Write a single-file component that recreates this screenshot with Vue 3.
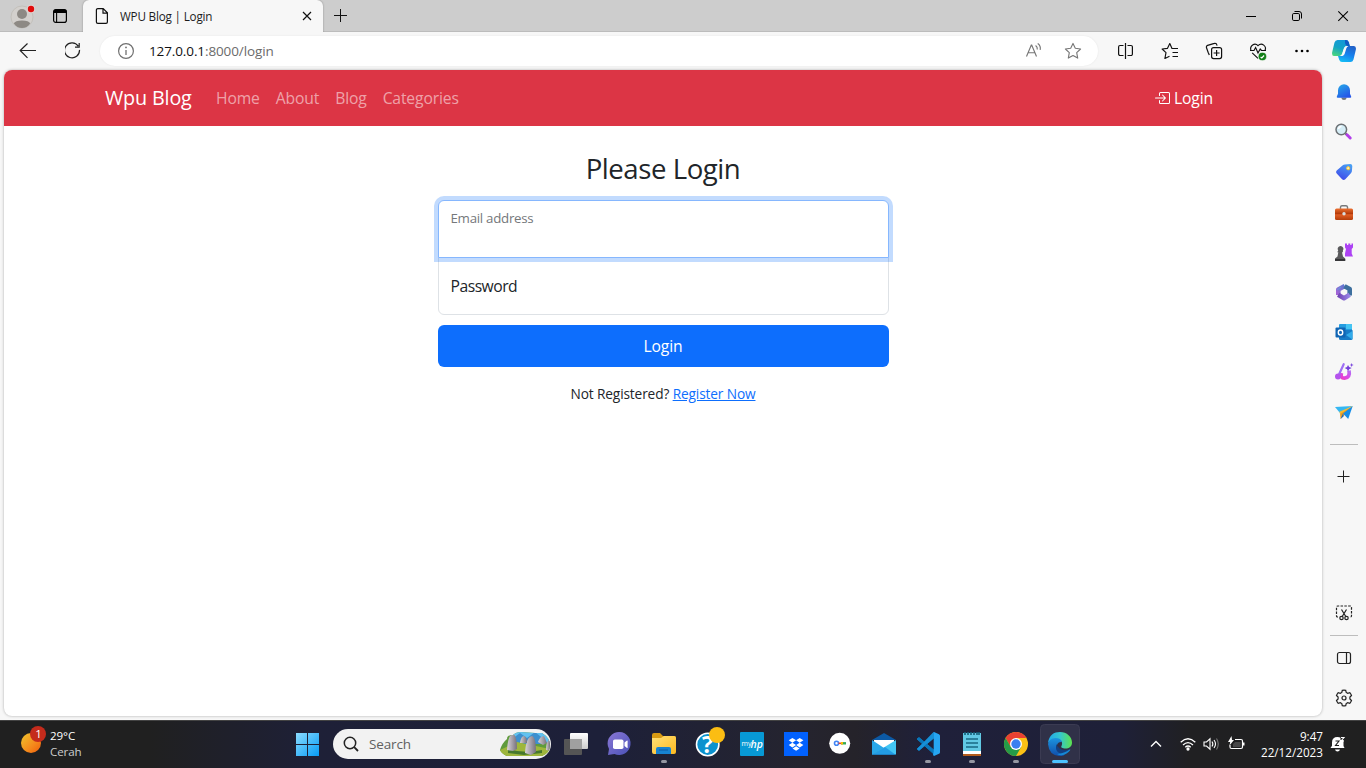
<script setup>
const links = ['Home', 'About', 'Blog', 'Categories']
</script>

<template>
  <div class="screen">
    <header class="tabs">
      <div class="tab-tools">
        <svg class="avatar" width="26" height="26" viewBox="0 0 26 26">
          <circle cx="12" cy="14" r="11" fill="#d3d0cd" stroke="#c3c0bb" />
          <circle cx="12" cy="11" r="5" fill="#8d8984" />
          <path d="M3.8 20.5Q5 17.5 12 17.5T20.2 20.5Q17 25 12 25T3.8 20.5Z" fill="#8d8984" />
          <circle cx="21" cy="6" r="4" fill="#e5d5d2" />
          <circle cx="21" cy="6" r="3.2" fill="#e00b0b" />
        </svg>
        <svg class="workspace" width="16" height="16" viewBox="0 0 16 16">
          <rect x="1.6" y="1.6" width="12.8" height="12.8" rx="2.2" fill="none" stroke="#000" stroke-width="1.2" />
          <path d="M1.5 5V3.5a2 2 0 0 1 2-2h9a2 2 0 0 1 2 2V5z" />
          <path d="M4.6 5v9" stroke="#000" stroke-width="1.1" />
        </svg>
      </div>
      <div class="tab">
        <svg width="14" height="18" viewBox="0 0 14 18" fill="none" stroke="#111" stroke-width="1.2">
          <path d="M2.8 1.6h5.4l4.2 4.2v9.2a1.4 1.4 0 0 1-1.4 1.4H2.8A1.4 1.4 0 0 1 1.4 15V3a1.4 1.4 0 0 1 1.4-1.4zM8 1.8v4.4h4.2" />
        </svg>
        <span class="tab-title">WPU Blog | Login</span>
        <svg width="10" height="10" viewBox="0 0 10 10"><path d="M1 1l8 8M9 1L1 9" stroke="#111" stroke-width="1.2" /></svg>
      </div>
      <svg class="new-tab" width="16" height="16" viewBox="0 0 16 16"><path d="M7.5 1v13M1 7.5h13" stroke="#111" /></svg>
      <div class="window-buttons">
        <svg width="46" height="32" viewBox="0 0 46 32"><path d="M18 16.5h10" stroke="#000" /></svg>
        <svg width="46" height="32" viewBox="0 0 46 32" fill="none" stroke="#000">
          <rect x="18.5" y="13.5" width="7" height="7" rx="1.3" />
          <path d="M20.5 11.5H25a2.5 2.5 0 0 1 2.5 2.5v4.5" />
        </svg>
        <svg width="46" height="32" viewBox="0 0 46 32"><path d="M18.3 11.3l9.6 9.6M27.9 11.3l-9.6 9.6" stroke="#000" stroke-width="1.1" /></svg>
      </div>
    </header>

    <div class="toolbar">
      <div class="nav-buttons">
        <svg width="44" height="38" viewBox="0 0 44 38" fill="none" stroke="#222" stroke-width="1.2"><path d="M13.5 11.5L6.2 18.5l7.3 7.3M6.2 18.5H22" /></svg>
        <svg width="44" height="38" viewBox="0 0 44 38" fill="none" stroke="#222" stroke-width="1.2"><path d="M13.3 14.2a7.500 7.500 0 1 0 1.200 3.700M14.200 11v4.200H10" /></svg>
      </div>
      <div class="address">
        <svg width="18" height="18" viewBox="0 0 18 18">
          <circle cx="9" cy="9" r="7.4" fill="none" stroke="#707070" stroke-width="1.2" />
          <path d="M9 8v5" stroke="#707070" stroke-width="1.3" />
          <circle cx="9" cy="5.4" r="0.9" fill="#707070" />
        </svg>
        <span class="url"><b>127.0.0.1</b>:8000/login</span>
        <svg class="read" width="18" height="18" viewBox="0 0 18 18" fill="none" stroke="#767676" stroke-width="1.15">
          <path d="M1.5 14.500L6.300 3h.4l4.800 11.500M3.200 10.700h6.700M10.600 3.500q2 1.500 1.700 4M12.700 1.400q3.300 2.200 2.500 6.400" />
        </svg>
        <svg width="18" height="18" viewBox="0 0 18 18" fill="none" stroke="#767676" stroke-width="1.1" stroke-linejoin="round">
          <path d="M9 1.4l2.3 4.9 5.3.7-3.9 3.7 1 5.4L9 13.5l-4.7 2.6 1-5.4L1.4 7l5.3-.7z" />
        </svg>
      </div>
      <div class="actions">
        <svg width="44" height="38" viewBox="0 0 44 38" fill="none" stroke="#111" stroke-width="1.2"><path d="M19.500 13.500H16a1.400 1.400 0 0 0-1.400 1.400v7.200A1.400 1.400 0 0 0 16 23.500h3.500M23.500 13.500H27a1.400 1.400 0 0 1 1.400 1.400v7.200A1.400 1.400 0 0 1 27 23.500h-3.500M21.500 11v16" /></svg>
        <svg width="44" height="38" viewBox="0 0 44 38" fill="none" stroke="#111" stroke-width="1.15" stroke-linejoin="round"><path d="M24 16.500L21.800 11.500l-2.400 4.900-5.300.6 3.900 3.700-1.100 5.800 4.600-2.300M23.500 16.500H30M24.500 20.500H30M24.500 24.500H30" /></svg>
        <svg width="44" height="38" viewBox="0 0 44 38" fill="none" stroke="#111" stroke-width="1.2"><rect x="19.6" y="15.6" width="10" height="11" rx="2" /><path d="M24.6 18v6M21.6 21h6M17.3 23l-1.2-2.7-1.6-4.6a1.8 1.8 0 0 1 1.1-2.3l6.8-2a1.8 1.8 0 0 1 2.3 1.2l.4 1" /></svg>
        <svg width="44" height="38" viewBox="0 0 44 38" fill="none" stroke="#111" stroke-width="1.15">
          <path d="M15 18.5c-1.7-4.5 3.7-8.7 7-4.8 3.7-4 9.3.7 6.8 5M16.2 20.8L22 26.4M14 18.5h4l1.6-3 2.4 5.5 2.2-4 1.3 1.5H30" />
          <circle cx="26.4" cy="24.5" r="4.1" fill="#128017" stroke="#f7f7f7" stroke-width=".5" /><path d="M24.6 25l1.2 1 2.3-2.5" stroke="#fff" />
        </svg>
        <svg width="44" height="38" viewBox="0 0 44 38"><circle cx="16.5" cy="19" r="1.300" /><circle cx="22" cy="19" r="1.300" /><circle cx="27.5" cy="19" r="1.300" /></svg>
      </div>
      <svg class="copilot" width="24" height="24" viewBox="0 0 24 24">
        <defs>
          <linearGradient id="cp1" x1=".6" y1="0" x2=".2" y2="1"><stop stop-color="#1598d8" /><stop offset=".5" stop-color="#14a3c5" /><stop offset="1" stop-color="#4ad67e" /></linearGradient>
          <linearGradient id="cp2" x1=".7" y1="0" x2=".3" y2="1"><stop stop-color="#2262c8" /><stop offset=".5" stop-color="#1580ee" /><stop offset="1" stop-color="#15bdf5" /></linearGradient>
        </defs>
        <path d="M5.500 1h8.500q2 0 2.800 2.200l1 3.800h-2.800q-2.300 0-3 2.400l-1.600 5.200Q9.700 17 7.500 17H2Q-.3 17 .1 13.500L2.500 3.500Q3.300 1 5.500 1z" fill="url(#cp1)" />
        <path d="M13 1h1q2 0 2.800 2.200l1 3.800h-2.300q-1.700 0-2.500-3z" fill="#125bc4" />
        <path d="M18.500 23H10q-2 0-2.800-2.200L6 17h3q2.300 0 3-2.400l1.600-5.200q.8-2.400 3-2.400H22q2.300 0 1.900 3.500l-2.400 10q-.8 2.500-3 2.500z" fill="url(#cp2)" />
        <path d="M14.500 7q-2.200.8-2.700 2.600l-1.700 5.200q-.5 1.500-1.700 2.200h1.900q1.700-.3 2.300-2l1.700-5.600q.5-1.700 2-2.400z" fill="#f7f9fa" />
      </svg>
    </div>

    <div class="workspace-row">
      <main class="page">
        <nav class="navbar">
          <div class="container">
            <span class="brand">Wpu Blog</span>
            <a v-for="link in links" :key="link" class="nav-link">{{ link }}</a>
            <a class="nav-link login-link">
              <svg width="16" height="16" viewBox="0 0 16 16" fill="currentColor">
                <path fill-rule="evenodd" d="M6 3.5a.5.5 0 0 1 .5-.5h8a.5.5 0 0 1 .5.5v9a.5.5 0 0 1-.5.5h-8a.5.5 0 0 1-.5-.5v-2a.5.5 0 0 0-1 0v2A1.5 1.5 0 0 0 6.5 14h8a1.5 1.5 0 0 0 1.5-1.5v-9A1.5 1.5 0 0 0 14.5 2h-8A1.5 1.5 0 0 0 5 3.5v2a.5.5 0 0 0 1 0z" />
                <path fill-rule="evenodd" d="M11.854 8.354a.5.5 0 0 0 0-.708l-3-3a.5.5 0 1 0-.708.708L10.293 7.5H1.5a.5.5 0 0 0 0 1h8.793l-2.147 2.146a.5.5 0 0 0 .708.708z" />
              </svg>
              <span>Login</span>
            </a>
          </div>
        </nav>
        <section class="form">
          <h1>Please Login</h1>
          <div class="field email">Email address</div>
          <div class="field password">Password</div>
          <button>Login</button>
          <p>Not Registered? <a>Register Now</a></p>
        </section>
      </main>

      <aside class="sidebar">
        <svg viewBox="0 0 20 20">
          <defs><linearGradient id="bell" x1="0" y1="0" x2=".6" y2="1"><stop stop-color="#27aee8" /><stop offset="1" stop-color="#2456e8" /></linearGradient></defs>
          <path d="M7.2 15.5h5.6Q12.3 18 10 18t-2.8-2.5z" fill="#70757a" /><path d="M4 8.2a6 6 0 0 1 12 0v3.6l1.2 2.7q.3 1.2-1 1.2H3.8q-1.3 0-1-1.2L4 11.800z" fill="url(#bell)" />
        </svg>
        <svg viewBox="0 0 20 20">
          <path d="M11.5 11.500l2 2" stroke="#555" stroke-width="2" /><path d="M13 12.800l3.200 3.200" stroke="#b33eea" stroke-width="3" stroke-linecap="round" /><circle cx="7.300" cy="7.500" r="5.300" fill="#d5edf6" stroke="#6c7074" stroke-width="1.500" /><path d="M4.500 7a3 3 0 0 1 3-2.500" stroke="#fff" fill="none" stroke-width="1.500" />
        </svg>
        <svg viewBox="0 0 20 20">
          <defs><linearGradient id="tag" x1=".8" y1="0" x2=".3" y2="1"><stop stop-color="#4aa2f4" /><stop offset="1" stop-color="#3e48e9" /></linearGradient></defs>
          <path d="M10.700 2.500l5.600-.5q1.900.1 2 2l-.4 5.300q-.1.900-.8 1.600l-5.800 6.400q-1.600 1.500-3.200 0l-5.400-5.800q-1.400-1.600 0-3.100l6.400-5.300q.7-.5 1.600-.6z" fill="url(#tag)" /><circle cx="14.200" cy="6.200" r="1.600" fill="#fff3b0" stroke="#f5c33b" />
        </svg>
        <svg viewBox="0 0 20 20">
          <defs><linearGradient id="box" x1="0" y1="0" x2="0" y2="1"><stop stop-color="#ed7132" /><stop offset=".45" stop-color="#b33b0b" /><stop offset=".55" stop-color="#e05e26" /><stop offset="1" stop-color="#b43d0a" /></linearGradient></defs>
          <path d="M6.500 7V5Q6.700 3.800 8 3.800h4q1.300 0 1.500 1.200V7" fill="none" stroke="#77797b" stroke-width="1.400" /><rect x="1" y="6.500" width="18" height="11.500" rx="1.500" fill="url(#box)" /><circle cx="10" cy="11.700" r="1.700" fill="#d8dfe2" />
        </svg>
        <svg viewBox="0 0 20 20">
          <path d="M11 1.500h2V3h1.300V1.500h2V3h1.200V1.500H19v4L17.700 7v4.500l1.300 3h-8v-3L12 7l-1-1.500z" fill="#ad42f4" /><path d="M4.200 8.500a2.800 2.800 0 1 1 4.700 0v1.800H8l1 4.300 2.200 2v2.300H1v-2.300l2.500-2 .8-4.300H3.200z" fill="#5a5a5c" /><path d="M1 17h10.200v1.900H1z" fill="#343436" />
        </svg>
        <svg viewBox="0 0 20 20">
          <defs><linearGradient id="m1" x1="1" y1="0" x2="0" y2="1"><stop stop-color="#5d79cf" /><stop offset="1" stop-color="#a363d5" /></linearGradient><linearGradient id="m2"><stop stop-color="#7044b4" /><stop offset="1" stop-color="#9a86e8" /></linearGradient></defs>
          <g fill="none" stroke-width="4.600" stroke-linejoin="round"><path d="M10.800 4L4.300 7.500V13" stroke="url(#m1)" /><path d="M10.500 4.200L15.700 7v6.500" stroke="#3d6f9e" /><path d="M4.200 12.800l5.800 3.400 5.700-3.400" stroke="url(#m2)" /></g>
          <path d="M3 8l4-3" stroke="#5aaee0" stroke-width="1.500" opacity=".55" />
        </svg>
        <svg viewBox="0 0 20 20">
          <rect x="5" y="2" width="13" height="11" rx="1" fill="#259de0" /><path d="M12 2h5q1 0 1 1v4h-6z" fill="#45c5f3" /><path d="M5 8h13.500v8.500q0 1.500-1.500 1.500H6.500Q5 18 5 16.500z" fill="#177bc7" /><path d="M18.500 9v8.500L12 13z" fill="#32abea" /><rect x="1.500" y="5.500" width="10" height="10" rx="1" fill="#1065b4" /><ellipse cx="6.500" cy="10.500" rx="2.200" ry="2.500" fill="none" stroke="#fff" stroke-width="1.400" />
        </svg>
        <svg viewBox="0 0 20 20">
          <defs><linearGradient id="brush" x1="0" y1="1" x2="1" y2="0"><stop stop-color="#ed3cc5" /><stop offset=".5" stop-color="#d94ae9" /><stop offset="1" stop-color="#b56af3" /></linearGradient></defs>
          <path d="M7.500 11q-1.500 5.200 3 5.200 6-.5 4.500-7.500" stroke="url(#brush)" stroke-width="3.700" fill="none" /><path d="M9.700 2.200L5.200 12" stroke="#9f70f4" stroke-width="2.200" stroke-linecap="round" /><circle cx="4" cy="14.500" r="3" fill="#b553ed" /><path d="M14 3l1.200 2 2.500 1-2.500 1.200L14 9.500l-1-2.300L10.700 6l2.300-1zM17.700 1l.5 1.500 1.500.5-1.500.6-.5 1.500-.6-1.500-1.400-.6 1.400-.5z" fill="#753fdc" />
        </svg>
        <svg viewBox="0 0 20 20">
          <path d="M1 5L18.700 4 6 11z" fill="#35b7f2" /><path d="M18.700 4L6 11l.5 6 3-3z" fill="#e99c22" /><path d="M18.700 4L9 11.500l5.200 5.500z" fill="#158ee8" /><path d="M9 11.500L6.500 17l3.200-2.800z" fill="#176ac4" /><path d="M18.700 4L5.500 9.800 6 12z" fill="#f5bd32" />
        </svg>
        <hr />
        <svg class="plus" viewBox="0 0 20 20"><path d="M9.500 3.500v12M3.500 9.500h12" stroke="#222" /></svg>
        <div class="spacer"></div>
        <svg class="line" viewBox="0 0 20 20"><path d="M4 14H3.500Q2.500 14 2.500 12.800V4.200Q2.500 3 3.700 3h12.600q1.200 0 1.200 1.200v8.600q0 1.200-1 1.200H16" stroke-dasharray="2.500 1.300" /><path d="M7.500 6.500l4.300 7M12.500 6.500l-4.300 7" /><circle cx="7.500" cy="15" r="1.700" /><circle cx="12.500" cy="15" r="1.700" /></svg>
        <hr class="lower" />
        <svg class="line" viewBox="0 0 20 20"><rect x="3.500" y="4.500" width="13" height="11" rx="2" /><path d="M12.500 4.500v11" /></svg>
        <svg class="line" viewBox="0 0 20 20"><path d="M8.300 2.300Q10 1.900 11.700 2.300l.5 2.100 1.500.9 2.100-.6q1.100 1.200 1.700 2.800l-1.600 1.600v1.800l1.600 1.600q-.6 1.600-1.700 2.800l-2.100-.6-1.500.9-.5 2.100q-1.700.4-3.400 0l-.5-2.100-1.500-.9-2.100.6q-1.100-1.200-1.700-2.800l1.600-1.600V9.100L2.500 7.500q.6-1.600 1.700-2.800l2.100.6 1.500-.9z" /><circle cx="10" cy="10" r="2" /></svg>
      </aside>
    </div>

    <footer class="taskbar">
      <div class="weather">
        <svg width="30" height="30" viewBox="0 0 30 30">
          <defs><linearGradient id="sun" x1="0" y1="0" x2="1" y2="1"><stop stop-color="#efc52d" /><stop offset=".6" stop-color="#f58a1c" /><stop offset="1" stop-color="#ef5c0b" /></linearGradient></defs>
          <circle cx="12" cy="18" r="10" fill="url(#sun)" /><circle cx="19" cy="9" r="8" fill="#c42b1c" />
          <text x="19.500" y="13" text-anchor="middle" fill="#fff" font-size="11.500">1</text>
        </svg>
        <div><div>29°C</div><div class="dim">Cerah</div></div>
      </div>
      <div class="apps">
        <svg width="44" height="48" viewBox="0 0 44 48">
          <defs><linearGradient id="win" x1="0" y1="0" x2="1" y2="1"><stop stop-color="#8bdcff" /><stop offset="1" stop-color="#069bf5" /></linearGradient></defs>
          <path d="M11 13h11v11H11zM23 13h11v11H23zM11 25h11v11H11zM23 25h11v11H23z" fill="url(#win)" />
        </svg>
        <div class="search">
          <svg width="16" height="16" viewBox="0 0 16 16"><circle cx="7" cy="7" r="5.700" fill="none" stroke="#222" stroke-width="1.500" /><path d="M11.200 11.200l3.800 3.800" stroke="#222" stroke-width="1.800" /></svg>
          <span>Search</span>
          <svg class="stones" width="50" height="26" viewBox="0 0 50 26">
            <defs><clipPath id="scene"><path d="M0 19Q2 12 7 8q0-4 6-4 3-3 8-3l14 1h7q8 5 8 12 0 8-8 11H7q-5-2-7-6z" /></clipPath><linearGradient id="rock"><stop stop-color="#d8d2d8" /><stop offset="1" stop-color="#77717c" /></linearGradient></defs>
            <g clip-path="url(#scene)"><path d="M0 0h50v26H0z" fill="#5f9b3c" /><path d="M12 0h38v12H12z" fill="#62c1f0" /><path d="M12 8l8-6 7 5 8-6 10 8v4H12z" fill="#3d8fce" /><path d="M0 19l17-8 33 7v8H0z" fill="#9eb63c" /><path d="M8 18l9 2 13 1 12-2v3l-18 2-16-2z" fill="#47782c" /><g fill="url(#rock)"><path d="M7 19Q8 3 13 3q4 1 4 15l-4 2z" /><path d="M25 22q1-16 7-17 4 1 4 16l-5 3z" /><path d="M20 12q1-7 4-7 3 1 3 7z" /><path d="M38 11q2-6 6-6l3 7-4 2z" /><path d="M46 19q0-9 4-11v12z" /></g></g>
          </svg>
        </div>
        <svg width="44" height="48" viewBox="0 0 44 48"><defs><linearGradient id="tv" x1="0" y1="0" x2="0" y2="1"><stop stop-color="#fff" /><stop offset="1" stop-color="#ccc" /></linearGradient></defs><rect x="16" y="13" width="18" height="16" rx="1" fill="url(#tv)" /><rect x="10" y="19" width="18" height="16" rx="1" fill="#555" /><path d="M16 19h12v10H16z" fill="#a0a0a0" /></svg>
        <svg width="44" height="48" viewBox="0 0 44 48"><defs><linearGradient id="chat" x1="0" y1="0" x2="1" y2="1"><stop stop-color="#8b78d5" /><stop offset="1" stop-color="#4951b7" /></linearGradient></defs><path d="M10 35l1-6a11.500 11.500 0 1 1 5.500 5z" fill="url(#chat)" /><rect x="15" y="19.500" width="10.500" height="9.500" rx="1.800" fill="#fff" /><path d="M26.500 22.500l2.500-2q.6-.2.6.5v6.500q0 .7-.6.5l-2.500-2z" fill="#fff" /></svg>
        <svg width="44" height="48" viewBox="0 0 44 48"><defs><linearGradient id="folder" x1="0" y1="0" x2="1" y2="1"><stop stop-color="#ffe178" /><stop offset="1" stop-color="#fdb91f" /></linearGradient></defs><path d="M10 15q0-2 2-2h6l3 3h11q2 0 2 2v3H10z" fill="#d89a12" /><path d="M10 18h9l3-2h10q2 0 2 2v14q0 2-2 2H12q-2 0-2-2z" fill="url(#folder)" /><path d="M14 34v-5q0-2 2-2h11q2 0 2 2v5z" fill="#1783d1" /><path d="M17 30h9" stroke="#0d5aa4" /><rect class="dot" x="19" y="40" width="6" height="3" rx="1.500" /></svg>
        <svg width="44" height="48" viewBox="0 0 44 48"><circle cx="21.700" cy="24.500" r="11.200" fill="#0c92ce" stroke="#fff" stroke-width="1.600" /><text x="21.500" y="33" fill="#fff" font-size="23" font-weight="700" text-anchor="middle">?</text><circle cx="31" cy="15" r="8" fill="#fbbd13" /></svg>
        <svg width="44" height="48" viewBox="0 0 44 48"><rect x="10" y="12" width="24" height="24" rx="1" fill="#0799d5" /><text x="11.500" y="26" fill="#fff" font-size="7">my</text><text x="20.500" y="27.500" fill="#fff" font-size="10.500" font-style="italic" font-weight="600">hp</text></svg>
        <svg width="44" height="48" viewBox="0 0 44 48"><path d="M10 12h24v24H10z" fill="#0161fe" /><path d="M18.400 18l3.700 2.300-3.700 2.400-3.700-2.400zM25.700 18l3.700 2.300-3.700 2.400-3.600-2.400zM18.400 22.700l3.700 2.300-3.700 2.400-3.700-2.400zM25.700 22.700l3.700 2.300-3.700 2.400-3.600-2.400zM22.100 26.200l3.500 2.200-3.500 2.300-3.600-2.300z" fill="#fff" /></svg>
        <svg width="44" height="48" viewBox="0 0 44 48"><circle cx="21.700" cy="23.300" r="10.500" fill="#fff" /><circle cx="18.500" cy="23.300" r="2" fill="none" stroke="#4285f4" stroke-width="1.600" /><path d="M20.500 23.300h3" stroke="#ea4335" stroke-width="1.600" /><path d="M23 23.300h5" stroke="#34a853" stroke-width="2.400" /><path d="M23 23.300h2" stroke="#fbbc05" stroke-width="2.400" /></svg>
        <svg width="44" height="48" viewBox="0 0 44 48"><path d="M10 20l12-7 12 7z" fill="#0c59a4" /><path d="M12 20h20v8H12z" fill="#fff" /><path d="M10 20l12 8-12 7z" fill="#29a7e8" /><path d="M34 20v14.500H10.500z" fill="#43c6f4" /><path d="M10 35l13-8 11 8z" fill="#1385dc" opacity=".65" /></svg>
        <svg width="44" height="48" viewBox="0 0 44 48"><path d="M11 19l2-1.500L29 31v4zM11 29l2 1.500L29 17v-4z" fill="#0877bb" stroke="#0877bb" stroke-width="1" /><path d="M28 12l5 2.200q1 .5 1 1.500v16.600q0 1-1 1.500L28 36l-1-1 .7-3.500v-15L27 13z" fill="#26a6f2" /><path d="M11 29l2 1.500L28 18v-6l-1.500 1z" fill="#1690d7" /><rect class="dot" x="19" y="40" width="6" height="3" rx="1.500" /></svg>
        <svg width="44" height="48" viewBox="0 0 44 48"><path d="M13 13h18v23H13z" fill="#61c9e4" /><path d="M13 31h18v3H13z" fill="#fff" /><path d="M13 34h18v2H13z" fill="#b35b1c" /><path d="M15 12v3m3-3v3m3-3v3m3-3v3m3-3v3m2-3v3" stroke="#155f78" stroke-width="1.600" /><path d="M16 19h12M16 23h12M16 27h12" stroke="#186984" stroke-width="1.500" /><rect class="dot" x="19" y="40" width="6" height="3" rx="1.500" /></svg>
        <svg width="44" height="48" viewBox="0 0 44 48"><circle cx="22" cy="24" r="12" fill="#fbc116" /><path d="M11.600 18A12 12 0 0 1 32.400 18H22L16.800 27z" fill="#e94132" /><path d="M11.600 18A12 12 0 0 0 22 36l5.200-9L16.800 27z" fill="#259b48" /><circle cx="22" cy="24" r="6" fill="#fff" /><circle cx="22" cy="24" r="4.700" fill="#3a7ff0" /><rect class="dot" x="19" y="40" width="6" height="3" rx="1.500" /></svg>
        <svg width="44" height="48" viewBox="0 0 44 48">
          <defs><linearGradient id="edge1" x1="0" y1="0" x2="1" y2="0"><stop stop-color="#20a7e9" /><stop offset=".5" stop-color="#35c6ce" /><stop offset="1" stop-color="#5ce34d" /></linearGradient><linearGradient id="edge2" x1="0" y1="0" x2="0" y2="1"><stop stop-color="#1c94df" /><stop offset="1" stop-color="#104eaa" /></linearGradient></defs>
          <rect x="2.500" y="4.500" width="39" height="39" rx="4" fill="#303148" stroke="#3b3b52" />
          <path d="M10 23C11 15 16 12 22 12c7 0 12 5 12 10.500 0 4-3 6-6.500 6-3 0-5-1-4-2.500 2-4-1-7-5-7-4 0-7 2-8.500 4z" fill="url(#edge1)" />
          <path d="M10 24q1-5.500 7.500-6 5.500 0 6.500 4-4-.5-5 3-1 6 6 8.300L26 35.500Q23 36 21 36 11 35 10 24z" fill="url(#edge2)" />
          <path d="M18.500 24q-2.500 9 7 10 3-.3 6-4 .5-.8-.5-.6-5 2-9.500-1-3-2.500-3-4.400z" fill="#123f82" /><path d="M19 34q5 3 10-.7 2-1.200 3.300-3.300.3-.8-.7-.4-5 4-12.600 4.400z" fill="#1688d4" />
          <rect x="14" y="40" width="16" height="3" rx="1.500" fill="#4cc2ff" />
        </svg>
      </div>
      <div class="tray">
        <svg width="12" height="12" viewBox="0 0 12 12"><path d="M1 8.500l5-5 5 5" fill="none" stroke="#fff" stroke-width="1.400" /></svg>
        <svg class="wifi" width="16" height="14" viewBox="0 0 16 14" fill="none" stroke="#fff" stroke-width="1.300"><path d="M.7 5.300q7.300-7 14.600 0M3 8q5-4.800 10 0M5.300 10.200q2.700-2.500 5.400 0" /><circle cx="8" cy="12" r="1" fill="#fff" /></svg>
        <svg width="17" height="14" viewBox="0 0 17 14" fill="none" stroke="#fff" stroke-width="1.100"><path d="M1 5h2.500L7 1.800v10.400L3.500 9H1zM9 4.500q1.700 2.500 0 5M11 3q3 4 0 8" /><path d="M13.500 1.500q3.500 5.500 0 11" stroke="#777" /></svg>
        <svg width="17" height="16" viewBox="0 0 17 16"><path d="M7 3.500h6q1.500 0 1.500 1.500v6q0 1.500-1.500 1.500H3.500Q2 12.500 2 11V9" fill="none" stroke="#fff" stroke-width="1.200" /><path d="M15 6.500h1.500v3H15z" fill="#fff" /><path d="M5 11V8l2-2h5.500v5z" fill="#fff" opacity=".18" /><path d="M3.500 0L0 6h2.200L1.500 9.500 6 4H4z" fill="#fff" /></svg>
        <div class="clock"><div>9:47</div><div>22/12/2023</div></div>
        <svg width="16" height="16" viewBox="0 0 16 16"><path d="M2 6.500Q2 1 7.500 1q2 0 3 .7V4h3v6l1 2H.5L2 9.800zM5 13.500h5q-.5 2-2.500 2T5 13.500z" fill="#fff" /><path d="M5.500 5H9L5.500 9.500H9" fill="none" stroke="#202020" stroke-width="1.100" /><path d="M11 1.500h3L11 5h3" fill="none" stroke="#fff" stroke-width="1.100" /></svg>
      </div>
    </footer>
  </div>
</template>

<style scoped>
* { box-sizing: border-box; }
.screen { width: 1366px; height: 768px; display: flex; flex-direction: column; overflow: hidden; background: #f7f7f7; font-family: "Open Sans", "Noto Sans", sans-serif; color: #212529; }
svg { display: block; flex: none; }
.tabs { height: 32px; display: flex; align-items: center; background: #cdcdcd; box-shadow: inset 0 -1px #bcbcbc; }
.tab-tools { width: 83px; display: flex; align-items: center; padding-left: 10px; }
.workspace { margin-left: 16px; }
.tab { width: 240px; height: 32px; padding: 0 11px 0 12px; display: flex; align-items: center; background: #f7f7f7; border-radius: 6px 6px 0 0; box-shadow: 0 0 2px rgba(0, 0, 0, .35); clip-path: inset(0 -3px 0 -3px); }
.tab-title { flex: 1; margin-left: 11px; font-size: 11.7px; letter-spacing: -.19px; line-height: 16px; color: #1b1b1b; }
.new-tab { margin-left: 10px; }
.window-buttons { display: flex; margin-left: auto; }
.toolbar { height: 38px; display: flex; }
.nav-buttons { display: flex; padding-left: 14px; width: 100px; }
.nav-buttons svg:last-child { margin-left: 7px; }
.address { width: 998px; height: 30px; margin-top: 4px; border-radius: 15px; padding: 0 16px 0 17px; display: flex; align-items: center; background: #fff; box-shadow: 0 0 2px rgba(0, 0, 0, .08); }
.url { flex: 1; margin-left: 14px; font-size: 13.5px; letter-spacing: -.11px; line-height: 20px; color: #6b6b6b; }
.url b { color: #111; font-weight: 400; }
.read { margin-right: 21px; }
.actions { display: flex; margin-left: 6px; }
.copilot { margin: 7px 0 0 8px; }
.workspace-row { height: 650px; display: flex; padding-left: 4px; }
.page { width: 1318px; height: 646px; background: #fff; border-radius: 8px; overflow: hidden; box-shadow: 0 0 3px rgba(0, 0, 0, .3); }
.navbar { height: 56px; background: #dc3545; }
.container { width: 1140px; height: 56px; margin: 0 auto; padding: 0 12px; display: flex; align-items: center; }
.brand { width: 87px; white-space: nowrap; font-size: 19.8px; letter-spacing: -.17px; line-height: 30px; color: #fff; margin-right: 16px; }
.nav-link { padding: 0 8px; font-size: 15.7px; letter-spacing: -.15px; line-height: 24px; color: rgba(255, 255, 255, .55); }
.login-link { display: flex; align-items: center; gap: 4px; margin-left: auto; color: #fff; }
.form { width: 451px; margin: 25px auto 0; display: flex; flex-direction: column; }
h1 { margin: 0 0 15px; font-size: 27.6px; letter-spacing: -.45px; line-height: 34px; font-weight: 400; text-align: center; }
.field { height: 58px; padding: 0 12px; font-size: 15.7px; letter-spacing: -.5px; line-height: 57px; border: 1px solid #dee2e6; background: #fff; }
.email { position: relative; border-color: #86b7fe; border-radius: 6px 6px 0 0; box-shadow: 0 0 0 4px rgba(13, 110, 253, .25); font-size: 13.3px; letter-spacing: -.28px; line-height: 34px; color: #75787b; }
.password { margin-top: -1px; border-radius: 0 0 6px 6px; }
button { height: 42px; margin-top: 10px; padding: 0; border: 0; border-radius: 6px; background: #0d6efd; color: #fff; font: 15.7px/42px "Open Sans", sans-serif; letter-spacing: -.1px; }
p { margin: 17px 0 0; font-size: 13.7px; letter-spacing: -.13px; line-height: 20px; text-align: center; }
p a { color: #0d6efd; text-decoration: underline; }
.sidebar { width: 44px; display: flex; flex-direction: column; align-items: center; padding-top: 12px; }
.sidebar svg { width: 20px; height: 20px; margin-bottom: 20px; }
.sidebar hr { width: 28px; height: 1px; margin: 2px 0 22px; border: 0; background: #bdbdbd; flex: none; }
.sidebar hr.lower { margin: -8px 0 12px; }
.spacer { flex: 1; }
.line { fill: none; stroke: #222; stroke-width: 1.2; }
.sidebar .line:last-child { margin-bottom: 12px; }
.taskbar { height: 48px; display: flex; align-items: center; border-top: 1px solid #434343; color: #fff; background: linear-gradient(90deg, #202020 0, #202020 150px, #1e2037 310px, #1d2039 600px, #25242f 800px, #25232a 855px, #1f203a 930px, #1e2038 1120px, #202022 1190px, #202020); font-size: 11.6px; line-height: 16px; }
.weather { width: 285px; padding-left: 19px; display: flex; align-items: center; }
.weather > div { margin: -2px 0 0 1px; letter-spacing: -.1px; }
.weather svg { margin-top: -9px; }
.dim { color: #ccc; }
.apps { display: flex; align-items: center; margin-top: -1px; }
.search { width: 218px; height: 30px; margin: 0 3px 0 4px; padding: 0 1px 0 10px; display: flex; align-items: center; background: #f2f2f2; border-radius: 15px; color: #606060; }
.search span { flex: 1; margin-left: 10px; font-size: 13.5px; letter-spacing: -.15px; line-height: 20px; }
.dot { fill: #9697a2; }
.tray { margin: -2px 0 0 auto; padding-right: 20px; display: flex; align-items: center; }
.wifi { margin: 0 7px 0 18px; }
.tray svg:nth-of-type(4) { margin-left: 8px; }
.clock { width: 78px; margin-right: 7px; text-align: right; font-size: 11.7px; }
</style>

<style>
body { margin: 0; overflow: hidden; }
</style>
